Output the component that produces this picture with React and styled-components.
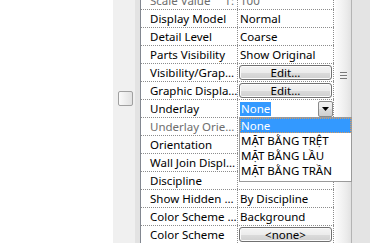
import React from 'react'
import styled, { createGlobalStyle } from 'styled-components'

const Global = createGlobalStyle`
  html, body { margin: 0; padding: 0; background: #fff; }
  body { width: 370px; height: 243px; overflow: hidden; }
`

const Page = styled.div`
  display: flex;
  width: 370px;
  height: 243px;
  overflow: hidden;
  font-family: "Noto Sans", "Open Sans", sans-serif;
  font-size: 11.5px;
  color: #000;
`
const Blank = styled.div`
  width: 113px;
  background: #fff;
`
const SideStrip = styled.div`
  width: 22px;
  background: #f0f0f0;
  padding: 91px 0 0 5px;
  box-sizing: border-box;
`
const SideEdge = styled.div`
  width: 5px;
  background: #e3e3e3;
  border-right: 1px solid #828790;
`
const Knob = styled.div`
  width: 15px;
  height: 15px;
  box-sizing: border-box;
  border: 1px solid #a0a0a0;
  border-radius: 2px;
  background: linear-gradient(to right, #fafafa, #e2e2e2);
`
const Grid = styled.div`
  width: 193px;
  margin-top: -8px;
  background: #fff;
`
const Row = styled.div`
  position: relative;
  display: grid;
  grid-template-columns: 97px 96px;
  height: 18px;
  box-sizing: border-box;
  border-bottom: 1px dotted #8c8c8c;
  line-height: 17px;
`
const Name = styled.div`
  display: flex;
  justify-content: space-between;
  padding: 0 3px 0 9px;
  border-right: 1px dotted #8c8c8c;
  white-space: nowrap;
  overflow: hidden;
  color: ${p => (p.$dim ? '#6d6d6d' : '#000')};
`
const Value = styled.div`
  position: relative;
  display: flex;
  align-items: flex-start;
  padding-left: 2px;
  border-right: 1px dotted #8c8c8c;
  white-space: nowrap;
  color: ${p => (p.$dim ? '#6d6d6d' : '#000')};
`
const ButtonCell = styled.div`
  display: flex;
  padding: 1px 0 0 1px;
  border-right: 1px dotted #8c8c8c;
`
const PushButton = styled.div`
  width: 93px;
  height: 15px;
  box-sizing: border-box;
  border: 1px solid #707070;
  border-radius: 3px;
  background: linear-gradient(#f4f4f4 0%, #ececec 50%, #dcdcdc 51%, #cfcfcf 100%);
  box-shadow: inset 0 0 0 1px #fbfbfb;
  text-align: center;
  line-height: 13px;
`
const Selected = styled.span`
  margin-top: 2px;
  padding: 0 1px;
  line-height: 14px;
  background: #3399ff;
  color: #fff;
`
const ArrowButton = styled.div`
  margin: 1px 0 0 auto;
  width: 15px;
  height: 16px;
  box-sizing: border-box;
  border: 1px solid #8a8a8a;
  border-radius: 2px;
  background: linear-gradient(#f2f2f2 0%, #ebebeb 50%, #dddddd 51%, #cfcfcf 100%);
  display: flex;
  align-items: center;
  justify-content: center;
`
const List = styled.div`
  position: absolute;
  top: 17px;
  left: 1px;
  width: 113px;
  padding-bottom: 3px;
  box-sizing: border-box;
  border: 1px solid #9a9a9a;
  background: #fff;
  z-index: 2;
`
const Item = styled.div`
  height: 15px;
  line-height: 15px;
  padding-left: 1px;
  box-sizing: border-box;
  white-space: nowrap;
  background: ${p => (p.$active ? '#3399ff' : '#fff')};
  color: ${p => (p.$active ? '#fff' : '#000')};
  outline: ${p => (p.$active ? '1px dotted #d99a5c' : 'none')};
  outline-offset: -1px;
`
const Scroll = styled.div`
  width: 17px;
  position: relative;
  background: linear-gradient(to right, #fdfdfd, #ececec 70%, #e2e2e2);
  border-right: 1px solid #b4b4b4;
  box-sizing: border-box;
  margin-left: 1px;
`
const Grip = styled.div`
  margin: 72px 0 0 5px;
  width: 7px;
  height: 7px;
  background: repeating-linear-gradient(#7a7a7a 0 1px, #f4f4f4 1px 2px, transparent 2px 3px);
`
const Track = styled.div`
  flex: 1;
  background: #e4e4e4;
`

const rows = [
  { name: 'Scale Value', extra: '1:', value: '100', dim: true },
  { name: 'Display Model', value: 'Normal' },
  { name: 'Detail Level', value: 'Coarse' },
  { name: 'Parts Visibility', value: 'Show Original' },
  { name: 'Visibility/Grap…', button: 'Edit...' },
  { name: 'Graphic Displa…', button: 'Edit...' },
  { name: 'Underlay', combo: true },
  { name: 'Underlay Orie…', dim: true, value: '' },
  { name: 'Orientation', value: '' },
  { name: 'Wall Join Displ…', value: '' },
  { name: 'Discipline', value: '' },
  { name: 'Show Hidden …', value: 'By Discipline' },
  { name: 'Color Scheme …', value: 'Background' },
  { name: 'Color Scheme', button: '<none>' },
]

const options = ['None', 'MẶT BẰNG TRỆT', 'MẶT BẰNG LẦU', 'MẶT BẰNG TRẦN']

export default function App() {
  return (
    <Page>
      <Global />
      <Blank />
      <SideStrip>
        <Knob />
      </SideStrip>
      <SideEdge />
      <Grid>
        {rows.map((r) => (
          <Row key={r.name}>
            <Name $dim={r.dim}>
              <span>{r.name}</span>
              {r.extra && <span>{r.extra}</span>}
            </Name>
            {r.button ? (
              <ButtonCell>
                <PushButton>{r.button}</PushButton>
              </ButtonCell>
            ) : r.combo ? (
              <Value>
                <Selected>None</Selected>
                <ArrowButton>
                  <svg width="7" height="4" viewBox="0 0 7 4">
                    <path d="M0 0h7L3.5 4z" fill="#000" />
                  </svg>
                </ArrowButton>
                <List>
                  {options.map((o, i) => (
                    <Item key={o} $active={i === 0}>{o}</Item>
                  ))}
                </List>
              </Value>
            ) : (
              <Value $dim={r.dim}>{r.value}</Value>
            )}
          </Row>
        ))}
      </Grid>
      <Scroll>
        <Grip />
      </Scroll>
      <Track />
    </Page>
  )
}
